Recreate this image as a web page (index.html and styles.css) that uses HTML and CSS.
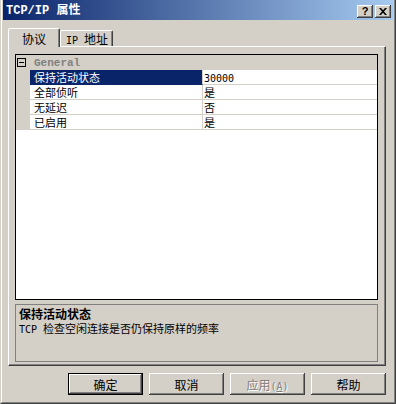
FILE: index.html
```html
<!DOCTYPE html>
<html>
<head>
    <title>TCP/IP 属性</title>
    <link rel="stylesheet" href="styles.css">
</head>
<body>
    <div class="window">
        <div class="frame">
            <div class="titlebar">
                <span class="title"><span class="en">TCP/IP </span>属性</span>
                <div class="caption-btns">
                    <span class="cbtn help">?</span>
                    <span class="cbtn">
                        <svg width="8" height="7" viewBox="0 0 8 7"><path d="M0 0h2l2 2.2L6 0h2L5 3.5 8 7H6L4 4.8 2 7H0l3-3.5z" fill="#000"/></svg>
                    </span>
                </div>
            </div>

            <div class="content">
                <div class="tabs">
                    <div class="tab active">协议</div>
                    <div class="tab"><span class="en">IP </span>地址</div>
                </div>

                <div class="panel">
                    <div class="grid">
                        <div class="cat">
                            <span class="expander"><i></i></span>
                            <span class="cat-name">General</span>
                        </div>
                        <div class="row selected">
                            <div class="gutter"></div>
                            <div class="name">保持活动状态</div>
                            <div class="value"><span class="en">30000</span></div>
                        </div>
                        <div class="row">
                            <div class="gutter"></div>
                            <div class="name">全部侦听</div>
                            <div class="value">是</div>
                        </div>
                        <div class="row">
                            <div class="gutter"></div>
                            <div class="name">无延迟</div>
                            <div class="value">否</div>
                        </div>
                        <div class="row">
                            <div class="gutter"></div>
                            <div class="name">已启用</div>
                            <div class="value">是</div>
                        </div>
                    </div>

                    <div class="desc">
                        <div class="desc-title">保持活动状态</div>
                        <div class="desc-text"><span class="en">TCP </span>检查空闲连接是否仍保持原样的频率</div>
                    </div>
                </div>

                <div class="buttons">
                    <button type="button" class="btn default">确定</button>
                    <button type="button" class="btn">取消</button>
                    <button type="button" class="btn disabled">应用<span class="en">(<u>A</u>)</span></button>
                    <button type="button" class="btn">帮助</button>
                </div>
            </div>
        </div>
    </div>
</body>
</html>
```

FILE: styles.css
```css
body {
    margin: 0;
    background-color: #d4d0c8;
    font-family: "Noto Sans CJK SC", sans-serif;
    font-size: 12px;
    color: #000;
}

.en {
    font-family: "DejaVu Sans Mono", monospace;
    font-size: 10px;
}

.window {
    width: 396px;
    height: 404px;
    box-sizing: border-box;
    border: 1px solid;
    border-top: none;
    border-color: #d4d0c8 #404040 #404040 #d4d0c8;
}

.frame {
    height: 100%;
    box-sizing: border-box;
    border: 1px solid;
    border-top: none;
    border-color: #fff #808080 #808080 #fff;
    padding: 0 1px;
}

/* title bar */
.titlebar {
    height: 20px;
    box-sizing: border-box;
    padding: 0 2px 2px 2px;
    background: linear-gradient(to right, #0a246a, #a6caf0);
    display: flex;
    align-items: flex-end;
    justify-content: space-between;
}

.title {
    color: #fff;
    font-weight: bold;
    font-size: 12px;
    line-height: 14px;
    padding-left: 1px;
}

.title .en {
    font-family: "Liberation Mono", monospace;
    font-size: 12px;
}

.caption-btns {
    display: flex;
    gap: 2px;
}

.cbtn {
    width: 16px;
    height: 13px;
    background-color: #d4d0c8;
    box-shadow: inset -1px -1px #404040, inset 1px 1px #fff, inset -2px -2px #808080;
    display: flex;
    align-items: center;
    justify-content: center;
}

.cbtn.help {
    font-family: "Liberation Sans", sans-serif;
    font-weight: bold;
    font-size: 11px;
    line-height: 11px;
}

/* tabs */
.content {
    padding: 8px 7px 0 5px;
}

.tabs {
    display: flex;
    align-items: flex-end;
    height: 18px;
}

.tab {
    height: 16px;
    box-sizing: border-box;
    border: 1px solid;
    border-bottom: none;
    border-color: #fff #404040 transparent #fff;
    border-radius: 2px 2px 0 0;
    box-shadow: inset -1px 0 #808080;
    padding: 0 4px 0 5px;
    line-height: 15px;
    background-color: #d4d0c8;
}

.tab.active {
    height: 19px;
    margin-bottom: -1px;
    padding: 2px 13px 0 13px;
    position: relative;
    z-index: 1;
}

.panel {
    border: 1px solid;
    border-color: #fff #404040 #404040 #fff;
    box-shadow: inset -1px -1px #808080;
    padding: 7px 7px 3px 6px;
}

/* property grid */
.grid {
    height: 246px;
    box-sizing: border-box;
    border: 1px solid #000;
    background-color: #fff;
    font-size: 11px;
}

.cat {
    height: 15px;
    background-color: #d4d0c8;
    display: flex;
    align-items: center;
}

.expander {
    width: 7px;
    height: 7px;
    margin-left: 1px;
    border: 1px solid #000;
    display: flex;
    align-items: center;
    justify-content: center;
}

.expander i {
    width: 5px;
    height: 1px;
    background-color: #000;
}

.cat-name {
    margin-left: 8px;
    font-family: "Liberation Mono", monospace;
    font-weight: bold;
    font-size: 11px;
    color: #808080;
}

.row {
    display: flex;
    height: 15px;
    line-height: 14px;
}

.gutter {
    width: 14px;
    background-color: #d4d0c8;
}

.name {
    width: 168px;
    padding-left: 4px;
    border-right: 1px solid #d4d0c8;
    border-bottom: 1px solid #d4d0c8;
}

.value {
    flex: 1;
    padding-left: 1px;
    border-bottom: 1px solid #d4d0c8;
}

.row.selected .name {
    background-color: #0a246a;
    border-bottom-color: #0a246a;
    color: #fff;
}

/* description */
.desc {
    margin-top: 4px;
    height: 58px;
    box-sizing: border-box;
    border: 1px solid #808080;
    padding: 2px 3px;
}

.desc-title {
    font-weight: bold;
    line-height: 14px;
}

.desc-text {
    font-size: 11px;
    line-height: 14px;
}

/* buttons */
.buttons {
    display: flex;
    justify-content: flex-end;
    gap: 6px;
    margin-top: 7px;
}

.btn {
    width: 75px;
    height: 22px;
    box-sizing: border-box;
    border: none;
    padding: 0;
    background-color: #d4d0c8;
    font-family: "Noto Sans CJK SC", sans-serif;
    font-size: 12px;
    color: #000;
    box-shadow: inset -1px -1px #404040, inset 1px 1px #fff, inset -2px -2px #808080, inset 2px 2px #d4d0c8;
}

.btn.default {
    border: 1px solid #000;
}

.btn.disabled {
    color: #808080;
    text-shadow: 1px 1px 0 #fff;
}
```
